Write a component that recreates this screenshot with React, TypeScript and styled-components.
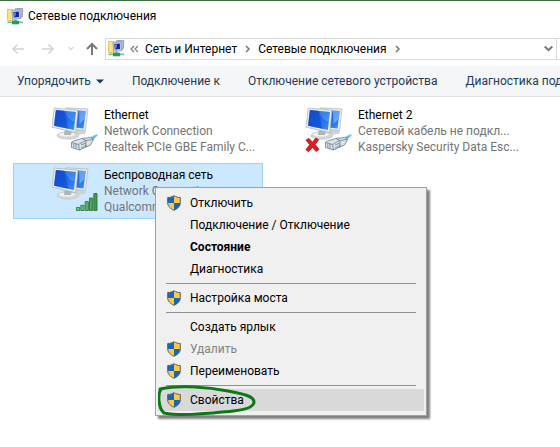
import React from "react";
import styled, { createGlobalStyle } from "styled-components";

const GlobalStyle = createGlobalStyle`
  *, *::before, *::after { box-sizing: border-box; }
  body {
    margin: 0;
    background: #fff;
    color: #000;
    font: 12px/16px Roboto, "Segoe UI", sans-serif;
    overflow: hidden;
  }
  button { font: inherit; color: inherit; background: none; border: 0; padding: 0; margin: 0; }
  svg { display: block; flex: none; }
`;

const Window = styled.div`
  position: relative;
  min-height: 100vh;
  border-top: 1px solid #38703a;
  overflow: hidden;
`;

const TitleBar = styled.header`
  display: flex;
  align-items: center;
  gap: 4px;
  height: 30px;
  padding: 0 7px;
`;

const Title = styled.h1`
  margin: 0;
  font: inherit;
`;

const NavRow = styled.nav`
  display: flex;
  align-items: center;
  height: 35px;
  padding-left: 10px;
`;

const NavButton = styled.button<{ $width: number }>`
  display: flex;
  align-items: center;
  width: ${(p) => p.$width}px;
  height: 22px;
`;

const AddressBar = styled.div`
  display: flex;
  flex: 1;
  align-items: center;
  height: 22px;
  padding: 0 3px 0 2px;
  border: 1px solid #d9d9d9;
`;

const Crumbs = styled.div`
  display: flex;
  flex: 1;
  align-items: center;
  gap: 7px;
  margin-left: 5px;
  white-space: nowrap;
`;

const RefreshBox = styled.div`
  width: 3px;
  height: 22px;
  border: solid #d9d9d9;
  border-width: 1px 0;
`;

const Toolbar = styled.div`
  display: flex;
  align-items: center;
  gap: 28px;
  height: 31px;
  padding-left: 17px;
  background: #f5f6f7;
  border-bottom: 1px solid #e2e3e4;
  color: #1e395b;
  white-space: nowrap;
`;

const Command = styled.button`
  display: flex;
  flex: none;
  align-items: center;
  gap: 5px;
  white-space: nowrap;
`;

const Connections = styled.main`
  display: grid;
  grid-template-columns: repeat(auto-fill, 250px);
  gap: 4px;
  padding: 6px 13px;
`;

const Tile = styled.button<{ $selected?: boolean }>`
  display: flex;
  align-items: flex-start;
  height: 56px;
  padding: 3px 0 3px 37px;
  border: 1px solid ${(p) => (p.$selected ? "#99d1ff" : "transparent")};
  background: ${(p) => (p.$selected ? "#cce8ff" : "transparent")};
  text-align: left;
`;

const TileText = styled.span`
  display: flex;
  flex-direction: column;
  flex: 1;
  min-width: 0;
  margin-left: 5px;
`;

const Line = styled.span<{ $muted?: boolean }>`
  white-space: nowrap;
  color: ${(p) => (p.$muted ? "#747474" : "#000")};
`;

const Menu = styled.div`
  position: absolute;
  left: 155px;
  top: 186px;
  width: 272px;
  padding: 4px 2px;
  border: 1px solid #a0a0a0;
  background: #f0f0f0;
  box-shadow: 3px 3px 2px rgba(0, 0, 0, 0.5);
`;

const MenuItem = styled.button<{ $active?: boolean; $strong?: boolean }>`
  position: relative;
  display: grid;
  grid-template-columns: 23px 1fr;
  align-items: center;
  width: 100%;
  height: 22px;
  padding-left: 9px;
  text-align: left;
  background: ${(p) => (p.$active ? "#d9d9d9" : "transparent")};
  font-weight: ${(p) => (p.$strong ? 700 : 400)};
  &:disabled { color: #838383; }
`;

const MenuLabel = styled.span`
  grid-column: 2;
  grid-row: 1;
`;

const Separator = styled.hr`
  height: 1px;
  margin: 3px 8px;
  border: 0;
  background: #919191;
`;

const Marker = styled.svg`
  position: absolute;
  left: 0;
  top: -4px;
  pointer-events: none;
`;

const FolderIcon = () => (
  <svg width="17" height="17" viewBox="0 0 17 17" aria-hidden="true">
    <path d="M.5 1.500h5.500v11H.5z" fill="#f7e382" stroke="#e0c868" />
    <path d="M8 1l1.500-.6 6.300.2-.3 7.600-2 2.300z" fill="#aeb9d3" stroke="#8995b3" strokeWidth=".8" />
    <path d="M5 2.500l8-.8.300 8.800-7.600.7z" fill="#cfd7ec" stroke="#8794b8" strokeWidth=".8" />
    <path d="M6.300 4l5.500-.6.200 5.600-5.200.6z" fill="#14239c" />
    <path d="M7 4.700l2.200-.3-1 4.200-1 .2z" fill="#6f8ee8" />
    <path d="M7.500 11.500h2V14h-2z" fill="#3fae7f" />
    <path d="M.5 13.500h15.500v1.700H.5z" fill="#62c09a" />
    <path d="M5 12.700h7v3.600H5z" fill="#1f9c62" />
  </svg>
);

const ArrowIcon = ({ dir }: { dir: "left" | "right" | "up" }) => (
  <svg width="15" height="14" viewBox="0 0 15 14" fill="none" aria-hidden="true"
    stroke={dir === "up" ? "#777" : "#d2d2d2"} strokeWidth={dir === "up" ? 2 : 1.5}>
    {dir === "left" && <path d="M14 7H3M7.500 2.500L3 7l4.500 4.500" />}
    {dir === "right" && <path d="M2 7h11M8.500 2.500L13 7l-4.500 4.500" />}
    {dir === "up" && <path d="M7 13V2M2 7l5-5 5 5" />}
  </svg>
);

const Chevron = ({ kind }: { kind: "right" | "down" | "faint" | "back" }) => {
  if (kind === "right")
    return <svg width="7" height="8" viewBox="0 0 7 8" fill="none" stroke="#777" strokeWidth="1.5" aria-hidden="true"><path d="M2 1l3 3-3 3" /></svg>;
  if (kind === "back")
    return <svg width="8" height="8" viewBox="0 0 8 8" fill="none" stroke="#777" strokeWidth="1.2" aria-hidden="true"><path d="M4 1L1 4l3 3M8 1L5 4l3 3" /></svg>;
  const down = kind === "down";
  return (
    <svg width="9" height="7" viewBox="0 0 9 7" fill="none" stroke={down ? "#777" : "#d8d8d8"} strokeWidth={down ? 2 : 1.4} aria-hidden="true">
      <path d={down ? "M.7 1.500L4.500 5.200 8.300 1.500" : "M1.500 2L4 4.500 6.500 2"} />
    </svg>
  );
};

type Kind = "cable" | "unplugged" | "wifi";

const Monitors = ({ kind }: { kind: Kind }) => (
  <svg width="48" height="48" viewBox="0 0 48 48" aria-hidden="true">
    <defs>
      <linearGradient id="screen" x1="0" y1="0" x2="1" y2="1">
        <stop offset="0" stopColor="#1550cc" />
        <stop offset=".5" stopColor="#1b66e6" />
        <stop offset="1" stopColor="#3d93f2" />
      </linearGradient>
      <linearGradient id="bars" x1="0" y1="0" x2="1" y2="0">
        <stop offset="0" stopColor="#8bcd98" />
        <stop offset="1" stopColor="#3c9150" />
      </linearGradient>
    </defs>
    <ellipse cx="29" cy="25" rx="6" ry="2.500" fill="#ced2d4" />
    <path d="M15 .8l22 1.200-2.600 21.500-19-2z" fill="#e9ebea" stroke="#b4babb" strokeWidth=".8" />
    <path d="M17 3l17.700 1-2.200 17.500-15-1.800z" fill="url(#screen)" />
    <path d="M28 4h6.500l-1 8-5 5z" fill="#a9d9fb" opacity=".5" />
    <ellipse cx="17" cy="28.500" rx="11" ry="3.700" fill="#d3d6d6" stroke="#bfc4c5" strokeWidth=".7" />
    <ellipse cx="16" cy="27.500" rx="8" ry="2" fill="#f0f1f0" />
    <path d="M14 21l7 2-1 5h-7z" fill="#aeb5b9" />
    <path d="M3.200 1l23.800 2.200-2.400 22.300L1 20.200z" fill="#eceeed" stroke="#b3b8b8" strokeWidth=".8" />
    <path d="M4.900 3l20 1.900-2 18L3 18.800z" fill="url(#screen)" />
    <path d="M4.900 3l8 .7 4.500 18-14.400-2.900z" fill="#1145c5" opacity=".55" />
    <path d="M14 3.900l10.900 1-1 9c-4 .5-7.300-2-9.900-10z" fill="#8cc6fb" opacity=".3" />
    {kind === "wifi" ? (
      <path d="M25.500 40.500h3.200v3h-3.200zM29.800 38.300H33v5.200h-3.200zM34.200 34.500h3.200v9h-3.200zM38.500 31h3.200v12.500h-3.200zM42.800 26.500H46v17h-3.200z" fill="url(#bars)" stroke="#287a3c" strokeWidth=".9" />
    ) : (
      <g strokeLinejoin="round">
        <path d="M37 31.500l8.500-4 1 .7-5 4.800-3 1z" fill="#5fb9d6" stroke="#8bd3e7" strokeWidth=".7" />
        <path d="M20.500 35.500l2-1.500 8-2.500 9-1 3 2-3 5.500-11 5-8-2.500z" fill="#dbe3e7" stroke="#7b8a94" strokeWidth=".9" />
        <path d="M20.500 35.500l7 2 1 5.500M27.500 37.500l7-4 8-1M31 31.500l4 2-.5 6.500M22.800 36.500v4M25 37v5M30 38l5-2M30 41l6-3" fill="none" stroke="#6d7e88" strokeWidth=".8" />
      </g>
    )}
    {kind === "unplugged" && (
      <path d="M1 33l3-1.500 3.500 3.700 3.200-4 3 1.300-3.500 5 3.800 5-3 2-3.500-4.300-4 4.500-2.500-2 3.700-5z" fill="#e51b23" stroke="#b80812" strokeWidth=".8" />
    )}
  </svg>
);

const Shield = () => (
  <svg width="14" height="16" viewBox="0 0 14 16" aria-hidden="true">
    <path d="M7 .7C5 2 3 2.500.7 2.500v5.300C.7 11.300 3.500 13.800 7 15.300c3.500-1.500 6.300-4 6.300-7.500V2.500C11 2.500 9 2 7 .7z" fill="#ffc83d" />
    <path d="M7 .7C5 2 3 2.500.7 2.500V8H7zM7 8h6.300c0 3.500-2.800 5.800-6.300 7.300z" fill="#1567bd" />
    <path d="M7 .7C5 2 3 2.500.7 2.500v5.300C.7 11.300 3.500 13.800 7 15.300c3.500-1.500 6.300-4 6.300-7.500V2.500C11 2.500 9 2 7 .7z" fill="none" stroke="#596066" />
  </svg>
);

const connections: { name: string; status: string; device: string; kind: Kind; selected?: boolean }[] = [
  { name: "Ethernet", status: "Network Connection", device: "Realtek PCIe GBE Family C...", kind: "cable" },
  { name: "Ethernet 2", status: "Сетевой кабель не подкл...", device: "Kaspersky Security Data Esc...", kind: "unplugged" },
  { name: "Беспроводная сеть", status: "Network Connection", device: "Qualcomm", kind: "wifi", selected: true },
];

type Entry = { label: string; shield?: boolean; strong?: boolean; disabled?: boolean; active?: boolean };

const menuGroups: Entry[][] = [
  [
    { label: "Отключить", shield: true },
    { label: "Подключение / Отключение" },
    { label: "Состояние", strong: true },
    { label: "Диагностика" },
  ],
  [{ label: "Настройка моста", shield: true }],
  [
    { label: "Создать ярлык" },
    { label: "Удалить", shield: true, disabled: true },
    { label: "Переименовать", shield: true },
  ],
  [{ label: "Свойства", shield: true, active: true }],
];

export default function App() {
  return (
    <>
      <GlobalStyle />
      <Window>
        <TitleBar>
          <FolderIcon />
          <Title>Сетевые подключения</Title>
        </TitleBar>
        <NavRow>
          <NavButton $width={30} aria-label="Назад"><ArrowIcon dir="left" /></NavButton>
          <NavButton $width={27} aria-label="Вперёд"><ArrowIcon dir="right" /></NavButton>
          <NavButton $width={18} aria-label="Последние расположения"><Chevron kind="faint" /></NavButton>
          <NavButton $width={20} aria-label="Вверх"><ArrowIcon dir="up" /></NavButton>
          <AddressBar>
            <FolderIcon />
            <Crumbs>
              <Chevron kind="back" />
              <button>Сеть и Интернет</button>
              <Chevron kind="right" />
              <button>Сетевые подключения</button>
              <Chevron kind="right" />
            </Crumbs>
            <button aria-label="Предыдущие расположения"><Chevron kind="down" /></button>
          </AddressBar>
          <RefreshBox />
        </NavRow>
        <Toolbar>
          <Command>
            Упорядочить
            <svg width="8" height="5" viewBox="0 0 8 5" aria-hidden="true"><path d="M0 .5h8L4 4.500z" fill="#1e395b" /></svg>
          </Command>
          <Command>Подключение к</Command>
          <Command>Отключение сетевого устройства</Command>
          <Command>Диагностика подключения</Command>
        </Toolbar>
        <Connections>
          {connections.map((c) => (
            <Tile key={c.name} $selected={c.selected}>
              <Monitors kind={c.kind} />
              <TileText>
                <Line>{c.name}</Line>
                <Line $muted>{c.status}</Line>
                <Line $muted>{c.device}</Line>
              </TileText>
            </Tile>
          ))}
        </Connections>
        <Menu role="menu">
          {menuGroups.map((group, i) => (
            <React.Fragment key={i}>
              {i > 0 && <Separator />}
              {group.map((e) => (
                <MenuItem key={e.label} role="menuitem" $active={e.active} $strong={e.strong} disabled={e.disabled}>
                  {e.shield && <Shield />}
                  <MenuLabel>{e.label}</MenuLabel>
                  {e.active && (
                    <Marker width="100" height="32" viewBox="0 0 100 32" fill="none" stroke="#0a7a14" strokeWidth="3" strokeLinecap="round" aria-hidden="true">
                      <path d="M2 4C22 0 50 2 70 6c15 3 26 5 26 11 0 6-14 9-32 10-20 2-41 4-58 1C1 24-1 10 3 4" />
                    </Marker>
                  )}
                </MenuItem>
              ))}
            </React.Fragment>
          ))}
        </Menu>
      </Window>
    </>
  );
}
